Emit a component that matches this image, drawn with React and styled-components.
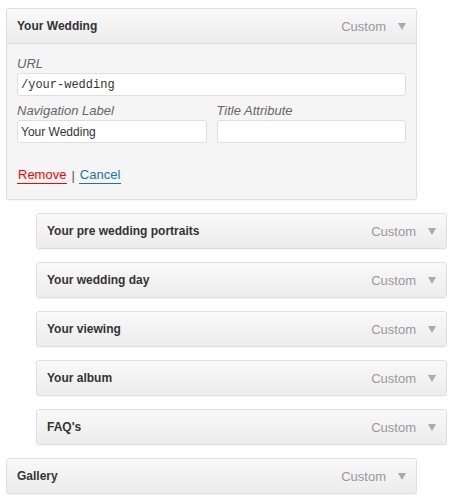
import React from 'react';
import styled, { createGlobalStyle } from 'styled-components';

const GlobalStyle = createGlobalStyle`
    body {
        margin: 0;
        background: #fff;
        font-family: "Liberation Sans", Arial, sans-serif;
    }
`;

const Menu = styled.ul`
    list-style: none;
    margin: 0;
    padding: 8px 6px;
    display: flex;
    flex-direction: column;
    gap: 13px;
`;

const Item = styled.li`
    width: 411px;
    box-sizing: border-box;
    margin-left: ${({ depth }) => depth * 30}px;
    border: 1px solid #dfdfdf;
    border-radius: 3px;
    background: #f5f5f5;
    box-shadow: 0 1px 1px rgba(0, 0, 0, 0.04);
    overflow: hidden;
`;

const Handle = styled.div`
    height: 34px;
    display: flex;
    align-items: center;
    padding: 0 10px;
    background: linear-gradient(to bottom, #f9f9f9, #ececec);
    border-bottom: ${({ open }) => (open ? '1px solid #dfdfdf' : 'none')};
`;

const ItemTitle = styled.span`
    flex: 1;
    font-size: 12px;
    font-weight: bold;
    color: #333;
`;

const ItemType = styled.span`
    font-size: 13px;
    color: #999;
`;

const Arrow = styled.span`
    width: 0;
    height: 0;
    margin-left: 12px;
    border-left: 4px solid transparent;
    border-right: 4px solid transparent;
    border-top: 7px solid #aaa;
`;

const Settings = styled.div`
    padding: 11px 10px 15px;
    display: flex;
    flex-direction: column;
    gap: 6px;
`;

const Row = styled.div`
    display: flex;
    gap: 10px;
`;

const Field = styled.label`
    flex: 1;
    display: flex;
    flex-direction: column;
`;

const FieldName = styled.span`
    font-size: 13px;
    line-height: 18px;
    font-style: italic;
    color: #666;
`;

const Input = styled.input`
    height: 23px;
    box-sizing: border-box;
    border: 1px solid #dfdfdf;
    border-radius: 3px;
    background: #fff;
    padding: 0 3px;
    font-size: 12px;
    font-family: ${({ mono }) => (mono ? '"Liberation Mono", "DejaVu Sans Mono", monospace' : '"Liberation Sans", Arial, sans-serif')};
    color: #333;
    outline: none;
`;

const Actions = styled.div`
    margin-top: 17px;
    display: flex;
    align-items: center;
    gap: 4px;
    font-size: 13px;
    line-height: 17px;
    color: #555;
`;

const Link = styled.a`
    color: ${({ danger }) => (danger ? '#f00' : '#21759b')};
    border-bottom: 1px solid ${({ danger }) => (danger ? '#f00' : '#21759b')};
    text-decoration: none;
    padding: 0 1px;
    cursor: pointer;
`;

const items = [
    { title: 'Your pre wedding portraits', depth: 1 },
    { title: 'Your wedding day', depth: 1 },
    { title: 'Your viewing', depth: 1 },
    { title: 'Your album', depth: 1 },
    { title: "FAQ's", depth: 1 },
    { title: 'Gallery', depth: 0 },
];

const Header = ({ title, open }) => (
    <Handle open={open}>
        <ItemTitle>{title}</ItemTitle>
        <ItemType>Custom</ItemType>
        <Arrow />
    </Handle>
);

const App = () => {
    return (
        <>
            <GlobalStyle />
            <Menu>
                <Item depth={0}>
                    <Header title="Your Wedding" open />
                    <Settings>
                        <Field>
                            <FieldName>URL</FieldName>
                            <Input mono defaultValue="/your-wedding" />
                        </Field>
                        <Row>
                            <Field>
                                <FieldName>Navigation Label</FieldName>
                                <Input defaultValue="Your Wedding" />
                            </Field>
                            <Field>
                                <FieldName>Title Attribute</FieldName>
                                <Input defaultValue="" />
                            </Field>
                        </Row>
                        <Actions>
                            <Link danger>Remove</Link>
                            <span>|</span>
                            <Link>Cancel</Link>
                        </Actions>
                    </Settings>
                </Item>
                {items.map((item) => (
                    <Item key={item.title} depth={item.depth}>
                        <Header title={item.title} />
                    </Item>
                ))}
            </Menu>
        </>
    );
};

export default App;
